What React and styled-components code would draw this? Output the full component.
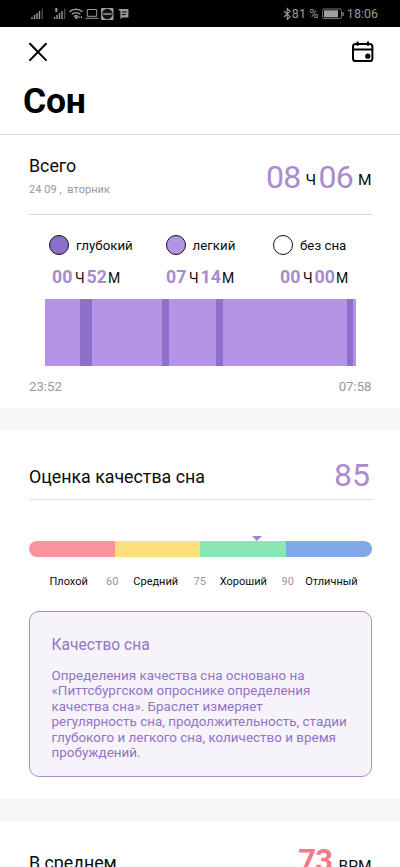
import styled, { createGlobalStyle } from 'styled-components';

const GlobalStyle = createGlobalStyle`
  * {
    box-sizing: border-box;
  }

  html, body {
    margin: 0;
    background: #fff;
    overflow: hidden;
  }

  body {
    font-family: Roboto, "Liberation Sans", sans-serif;
    color: #0b0b0b;
  }
`;

const Screen = styled.div`
  display: flex;
  flex-direction: column;
  width: 400px;
  height: 867px;
  overflow: hidden;
  background: #fff;
`;

const StatusBar = styled.div`
  display: flex;
  flex: none;
  justify-content: space-between;
  height: 27px;
  padding: 0 22px 0 30px;
  background: #000;
  color: #9c9c9c;
`;

const StatusGroup = styled.div`
  display: flex;
  align-items: center;
  height: 28px;
`;

const StatusText = styled.span`
  font-size: 12.5px;
  line-height: 28px;
  letter-spacing: ${({ $spacing }) => $spacing || '0'};
  white-space: pre;
`;

const Header = styled.header`
  flex: none;
  height: 108px;
  padding: 12px 26px 0 23px;
  border-bottom: 1px solid #dedede;
`;

const HeaderActions = styled.div`
  display: flex;
  justify-content: space-between;
  height: 26px;
  padding-left: 5px;
`;

const IconButton = styled.button`
  display: flex;
  padding: 0;
  border: none;
  background: none;
`;

const PageTitle = styled.h1`
  margin: 16px 0 0;
  font-size: 35.5px;
  font-weight: 700;
  line-height: 40px;
  letter-spacing: -0.2px;
  color: #000;
`;

const Section = styled.section`
  flex: none;
  height: ${({ $height }) => $height}px;
  padding: 0 28.5px 0 29px;
`;

const SectionGap = styled.div`
  flex: none;
  height: ${({ $height }) => $height}px;
  background: #f7f7f7;
`;

const SectionHead = styled.div`
  display: flex;
  justify-content: space-between;
  height: ${({ $height }) => $height}px;
  border-bottom: 1px solid ${({ $line }) => $line || 'transparent'};
`;

const SectionTitle = styled.h2`
  margin: ${({ $top }) => $top}px 0 0;
  font-size: 17.8px;
  font-weight: 400;
  line-height: 22px;
  white-space: nowrap;
`;

const DateLine = styled.div`
  margin-top: 5px;
  font-size: 11px;
  line-height: 16px;
  letter-spacing: 0.05px;
  color: #999;
  white-space: pre;
`;

const Figure = styled.div`
  display: flex;
  align-items: ${({ $align }) => $align || 'baseline'};
  height: 40px;
  margin-top: ${({ $top }) => $top}px;
  padding-right: ${({ $right }) => $right || 0}px;
  line-height: 40px;
`;

const BigNumber = styled.span`
  font-size: ${({ $size }) => $size || 32}px;
  font-weight: ${({ $weight }) => $weight || 400};
  letter-spacing: ${({ $spacing }) => $spacing || '-0.6px'};
  color: ${({ $color }) => $color || '#a88ccd'};
`;

const Unit = styled.span`
  margin: ${({ $margin }) => $margin || '0'};
  font-size: ${({ $size }) => $size || 15.5}px;
  line-height: ${({ $line }) => $line || 'inherit'};
`;

const Legend = styled.div`
  display: grid;
  grid-template-columns: 116.5px 107.5px auto;
  padding: 20px 0 0 20px;
`;

const LegendLabel = styled.div`
  display: flex;
  align-items: center;
  height: 20px;
  font-size: 13.3px;
  line-height: 21px;
  white-space: nowrap;
`;

const Dot = styled.span`
  width: 20px;
  height: 20px;
  margin-right: 7px;
  border: 1.3px solid #111;
  border-radius: 50%;
  background: ${({ $color }) => $color};
`;

const LegendValue = styled.div`
  display: flex;
  align-items: baseline;
  height: 22px;
  margin-top: 11px;
  padding-left: ${({ $indent }) => $indent}px;
  line-height: 22px;
`;

const LegendNumber = styled.span`
  font-size: 17.8px;
  font-weight: 700;
  color: #a98bd0;
`;

const Phases = styled.div`
  display: flex;
  width: 311px;
  height: 67px;
  margin: 11px 0 0 16px;
`;

const Phase = styled.div`
  background: ${({ $deep }) => ($deep ? '#8e70ca' : '#b594e5')};
`;

const TimeRange = styled.div`
  display: flex;
  justify-content: space-between;
  margin-top: 11px;
  font-size: 13.2px;
  line-height: 20px;
  color: #999;
`;

const Scale = styled.div`
  position: relative;
  display: grid;
  grid-template-columns: repeat(4, 1fr);
  height: 16px;
  margin-top: 41px;
  border-radius: 8px;
`;

const ScaleStep = styled.div`
  background: ${({ $color }) => $color};

  &:first-child {
    border-radius: 8px 0 0 8px;
  }

  &:last-of-type {
    border-radius: 0 8px 8px 0;
  }
`;

const Marker = styled.span`
  position: absolute;
  top: -5px;
  border: 5.5px solid transparent;
  border-top: 5px solid #a084cc;
  border-bottom: none;
  transform: translateX(-50%);
`;

const ScaleLabels = styled.div`
  display: grid;
  grid-template-columns: 56.5px 27.3px 60.2px 26.3px 61.7px 23.8px auto;
  margin-top: 16px;
  padding-left: 20.5px;
  font-size: 11px;
  line-height: 17px;
  white-space: nowrap;
`;

const ScaleLimit = styled.span`
  color: #999;
`;

const InfoCard = styled.div`
  height: 166px;
  margin-top: 21px;
  padding: 22px 20px 0 21.5px;
  border: 1.4px solid #a98dd0;
  border-radius: 10px;
  background: #f6f3fb;
  color: #9273c4;
`;

const InfoTitle = styled.h3`
  margin: 0;
  font-size: 15.6px;
  font-weight: 400;
  line-height: 22px;
`;

const InfoText = styled.p`
  margin: 11.5px 0 0;
  font-size: 13.45px;
  line-height: 15.6px;
  white-space: pre;
`;

const legend = [
  { label: 'глубокий', color: '#8c70cb', hours: '00', minutes: '52', indent: 3 },
  { label: 'легкий', color: '#b594e5', hours: '07', minutes: '14', indent: 0.5 },
  { label: 'без сна', color: '#fff', hours: '00', minutes: '00', indent: 7 },
];

const phases = [35, 12, 70, 7, 46.5, 7.5, 124, 6, 3];

const infoLines = [
  'Определения качества сна основано на',
  '«Питтсбургском опроснике определения',
  'качества сна». Браслет измеряет',
  'регулярность сна, продолжительность, стадии',
  'глубокого и легкого сна, количество и время',
  'пробуждений.',
];

function StatusIcons() {
  return (
    <svg width="104" height="28" viewBox="30 0 104 28" fill="none" stroke="#9c9c9c">
      <path d="M32 19v-2M34.5 19v-4M37 19v-6M39.5 19v-8" strokeWidth="1.4" />
      <path d="M42.3 19V8.5" stroke="#555" strokeWidth="1.2" />
      <path d="M54.5 19v-2M57 19v-4M59.5 19v-6M62 19v-8" strokeWidth="1.4" />
      <path d="M64.7 19V8.5" stroke="#555" strokeWidth="1.2" />
      <path d="M56.3 8v4" strokeWidth="2" />
      <path d="M69.5 11.8a9.8 9.8 0 0 1 13 0M71.7 14.3a6.5 6.5 0 0 1 8.6 0M73.8 16.7a3.5 3.5 0 0 1 4.2-.2" strokeWidth="1.5" />
      <path d="M75 17.8h2.6M78.5 17.3h1.2M80.8 17.3H82" strokeWidth="2" />
      <path d="M87.3 9.5h9.4v6.8h-9.4zM85.5 18.3h13" strokeWidth="1" />
      <rect x="101" y="8" width="12.5" height="12" rx="1" fill="#9c9c9c" stroke="none" />
      <circle cx="107.3" cy="14" r="5.2" fill="#111" stroke="none" />
      <path d="M103 14h8.6" strokeWidth="1.5" />
      <path d="M118 9h10.4v8.6h-6.2l-1.8 1.6v-8z" fill="#9c9c9c" stroke="none" />
      <path d="M121.8 12h5M121.8 14.6h4" stroke="#000" strokeWidth="1" />
    </svg>
  );
}

function BluetoothIcon() {
  return (
    <svg width="9" height="14" viewBox="0 0 9 14" fill="none" stroke="#9c9c9c" strokeWidth="1.1">
      <path d="M1 4l6 5.7-2.8 2.8v-11L7 4.3 1 10" />
    </svg>
  );
}

function BatteryIcon() {
  return (
    <svg width="22" height="12" viewBox="0 0 22 12" fill="none">
      <rect x=".6" y="1" width="18.8" height="9.6" rx="1.4" stroke="#777" />
      <rect x="2" y="2.3" width="14" height="7" fill="#a0a0a0" />
      <path d="M21 4v4" stroke="#999" strokeWidth="1.2" />
    </svg>
  );
}

function CloseIcon() {
  return (
    <svg width="20" height="26" viewBox="0 0 20 26" stroke="#000" strokeWidth="2" strokeLinecap="round">
      <path d="M2 4.7l16 16.4M18 4.7L2 21.1" />
    </svg>
  );
}

function CalendarIcon() {
  return (
    <svg width="23" height="26" viewBox="0 0 23 26" fill="none" stroke="#000" strokeWidth="2">
      <rect x="2" y="5" width="19.4" height="17" rx="2.6" />
      <path d="M2 10.4h19.4M6.6 2.4v4.4M17 2.4v4.4" />
      <circle cx="16.8" cy="17.2" r="2.6" fill="#000" stroke="none" />
    </svg>
  );
}

function App() {
  return (
    <Screen>
      <GlobalStyle />
      <StatusBar>
        <StatusGroup>
          <StatusIcons />
        </StatusGroup>
        <StatusGroup>
          <BluetoothIcon />
          <StatusText $spacing="0.1px">81 % </StatusText>
          <BatteryIcon />
          <StatusText> 18:06</StatusText>
        </StatusGroup>
      </StatusBar>

      <Header>
        <HeaderActions>
          <IconButton><CloseIcon /></IconButton>
          <IconButton><CalendarIcon /></IconButton>
        </HeaderActions>
        <PageTitle>Сон</PageTitle>
      </Header>

      <Section $height={273}>
        <SectionHead $height={80} $line="#d6d6d6">
          <div>
            <SectionTitle $top={20}>Всего</SectionTitle>
            <DateLine>24 09 ,  вторник</DateLine>
          </div>
          <Figure $top={22} $align="flex-start">
            <BigNumber $spacing="-0.8px">08</BigNumber>
            <Unit $line="46px" $margin="0 2.5px 0 5px">Ч</Unit>
            <BigNumber $spacing="-0.8px">06</BigNumber>
            <Unit $line="46px" $margin="0 0 0 5px">М</Unit>
          </Figure>
        </SectionHead>
        <Legend>
          {legend.map((item) => (
            <div key={item.label}>
              <LegendLabel>
                <Dot $color={item.color} />
                {item.label}
              </LegendLabel>
              <LegendValue $indent={item.indent}>
                <LegendNumber>{item.hours}</LegendNumber>
                <Unit $size={14} $margin="0 2px 0 2.5px">Ч</Unit>
                <LegendNumber>{item.minutes}</LegendNumber>
                <Unit $size={14} $margin="0 0 0 1px">М</Unit>
              </LegendValue>
            </div>
          ))}
        </Legend>
        <Phases>
          {phases.map((width, i) => (
            <Phase key={i} $deep={i % 2 === 1} style={{ flexGrow: width }} />
          ))}
        </Phases>
        <TimeRange>
          <span>23:52</span>
          <span>07:58</span>
        </TimeRange>
      </Section>

      <SectionGap $height={23} />

      <Section $height={368}>
        <SectionHead $height={69} $line="#dedede">
          <SectionTitle $top={35}>Оценка качества сна</SectionTitle>
          <Figure $top={24} $right={1.5}>
            <BigNumber $spacing="0">85</BigNumber>
          </Figure>
        </SectionHead>
        <Scale>
          <ScaleStep $color="#fb939e" />
          <ScaleStep $color="#fce079" />
          <ScaleStep $color="#8be6b6" />
          <ScaleStep $color="#7fa8e5" />
          <Marker style={{ left: `${(2 + (85 - 75) / 15) * 25}%` }} />
        </Scale>
        <ScaleLabels>
          <span>Плохой</span>
          <ScaleLimit>60</ScaleLimit>
          <span>Средний</span>
          <ScaleLimit>75</ScaleLimit>
          <span>Хороший</span>
          <ScaleLimit>90</ScaleLimit>
          <span>Отличный</span>
        </ScaleLabels>
        <InfoCard>
          <InfoTitle>Качество сна</InfoTitle>
          <InfoText>{infoLines.join('\n')}</InfoText>
        </InfoCard>
      </Section>

      <SectionGap $height={22} />

      <Section $height={80}>
        <SectionHead $height={80}>
          <SectionTitle $top={31}>В среднем</SectionTitle>
          <Figure $top={20}>
            <BigNumber $weight={700} $size={31} $color="#f57a87">73</BigNumber>
            <Unit $margin="0 0 0 6px">BPM</Unit>
          </Figure>
        </SectionHead>
      </Section>
    </Screen>
  );
}

export default App;
